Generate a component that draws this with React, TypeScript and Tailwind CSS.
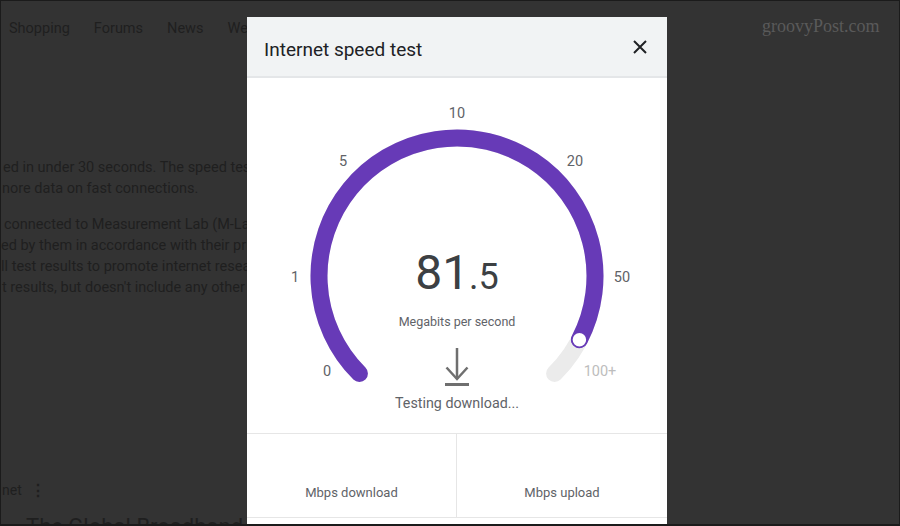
import React from "react";

// gauge geometry, in px inside the dial box
const CX = 210;
const CY = 198;
const R = 138;

const point = (deg: number) => {
  const rad = (deg * Math.PI) / 180;
  return [CX + R * Math.sin(rad), CY - R * Math.cos(rad)];
};

const arcPath = (from: number, to: number) => {
  const [x0, y0] = point(from);
  const [x1, y1] = point(to);
  const large = to - from > 180 ? 1 : 0;
  return `M ${x0} ${y0} A ${R} ${R} 0 ${large} 1 ${x1} ${y1}`;
};

const ticks = [
  { label: "0", x: 80, y: 293, faded: false },
  { label: "1", x: 48, y: 199, faded: false },
  { label: "5", x: 96, y: 83, faded: false },
  { label: "10", x: 210, y: 35, faded: false },
  { label: "20", x: 328, y: 83, faded: false },
  { label: "50", x: 375, y: 199, faded: false },
  { label: "100+", x: 353, y: 293, faded: true },
];

const SPEED_ANGLE = 117.5;

const Gauge = () => {
  const [kx, ky] = point(SPEED_ANGLE);
  return (
    <svg width="420" height="355" viewBox="0 0 420 355" className="block">
      <path d={arcPath(-135, 135)} fill="none" stroke="#ebebeb" strokeWidth="17" strokeLinecap="round" />
      <path d={arcPath(-135, SPEED_ANGLE)} fill="none" stroke="#673ab7" strokeWidth="17" strokeLinecap="round" />
      <circle cx={kx} cy={ky} r="7.5" fill="#ffffff" stroke="#673ab7" strokeWidth="1.5" />
      {ticks.map((t) => (
        <text
          key={t.label}
          x={t.x}
          y={t.y}
          textAnchor="middle"
          dominantBaseline="central"
          fontSize="14.5"
          fontFamily="Roboto, 'Liberation Sans', sans-serif"
          fill={t.faded ? "#bdbdbd" : "#5f6368"}
        >
          {t.label}
        </text>
      ))}
    </svg>
  );
};

const DownloadIcon = () => (
  <svg width="24" height="38" viewBox="0 0 24 38">
    <path d="M12 0 V31" stroke="#6f6f6f" strokeWidth="2.5" fill="none" />
    <path d="M1.5 19.5 L12 31 L22.5 19.5" stroke="#6f6f6f" strokeWidth="2.5" fill="none" />
    <path d="M0 36.5 H24" stroke="#6f6f6f" strokeWidth="3" fill="none" />
  </svg>
);

const SpeedTestDialog = () => (
  <div className="absolute left-[246px] top-[16px] w-[420px] h-[520px] bg-white font-[Roboto,'Liberation_Sans',sans-serif]">
    <div className="h-[61px] bg-[#f1f3f4] border-b-2 border-[#e4e6e8] flex items-center justify-between pl-[17px] pr-[20px]">
      <h1 className="text-[19px] leading-[24px] text-[#202124] pt-[6px]">Internet speed test</h1>
      <svg width="14" height="14" viewBox="0 0 14 14">
        <path d="M1 1 L13 13 M13 1 L1 13" stroke="#202124" strokeWidth="2" />
      </svg>
    </div>

    <div className="relative">
      <Gauge />
      <div className="absolute left-0 right-0 top-[171px] flex flex-col items-center">
        <div className="flex items-baseline text-[#3c4043] leading-none">
          <span className="text-[48px] leading-[48px]">81</span>
          <span className="text-[36px] leading-[36px]">.5</span>
        </div>
        <div className="mt-[17px] text-[12.5px] leading-[16px] text-[#5f6368]">Megabits per second</div>
        <div className="mt-[18px]">
          <DownloadIcon />
        </div>
        <div className="mt-[7px] text-[14.3px] leading-[20px] text-[#5f6368]">Testing download...</div>
      </div>
    </div>

    <div className="grid grid-cols-2 border-t border-b border-[#e6e6e6]">
      <div className="h-[83px] flex items-end justify-center pb-[15px] border-r border-[#e6e6e6] text-[13px] leading-[18px] text-[#5f6368]">
        Mbps download
      </div>
      <div className="h-[83px] flex items-end justify-center pb-[15px] text-[13px] leading-[18px] text-[#5f6368]">
        Mbps upload
      </div>
    </div>
  </div>
);

export default function App() {
  return (
    <div className="relative w-[900px] h-[526px] overflow-hidden bg-[#333333] border border-b-2 border-[#1b1b1b] font-[Roboto,'Liberation_Sans',sans-serif] text-[#1f1f1f]">
      {/* dimmed search page behind the dialog */}
      <div className="whitespace-nowrap">
        <nav className="flex gap-6 pl-[8px] pt-[18px] text-[14.5px] leading-[20px]">
          <span>Shopping</span>
          <span>Forums</span>
          <span>News</span>
          <span>Web</span>
        </nav>

        <div className="mt-[118px] text-[14.5px] leading-[21px]">
          <p className="pl-[2px]">ed in under 30 seconds. The speed test connection transfers less than 40 MB</p>
          <p className="pl-[1px]">nore data on fast connections.</p>
        </div>

        <div className="mt-[15px] text-[14.5px] leading-[21px]">
          <p className="pl-[3px]">connected to Measurement Lab (M-Lab) and your IP address will be</p>
          <p>ed by them in accordance with their privacy policy. M-Lab conducts</p>
          <p>ll test results to promote internet research. Published information</p>
          <p className="pl-[1px]">t results, but doesn't include any other information about you.</p>
        </div>

        <div className="mt-[182px] flex items-center gap-[8px] text-[14px] leading-[21px]">
          <span className="pl-[1px]">net</span>
          <span className="text-[16px] leading-[21px] font-bold">⋮</span>
        </div>

        <div className="mt-[12px] flex items-baseline text-[22px] leading-[28px]">
          <span className="text-[14px] w-[25px]">s</span>
          <span>The Global Broadband Speed Test</span>
        </div>
      </div>

      <div className="absolute left-[761px] top-[14px] font-['Liberation_Serif',serif] text-[18px] leading-[22px] text-[#5a5a5a]">
        groovyPost.com
      </div>

      <SpeedTestDialog />
    </div>
  );
}
